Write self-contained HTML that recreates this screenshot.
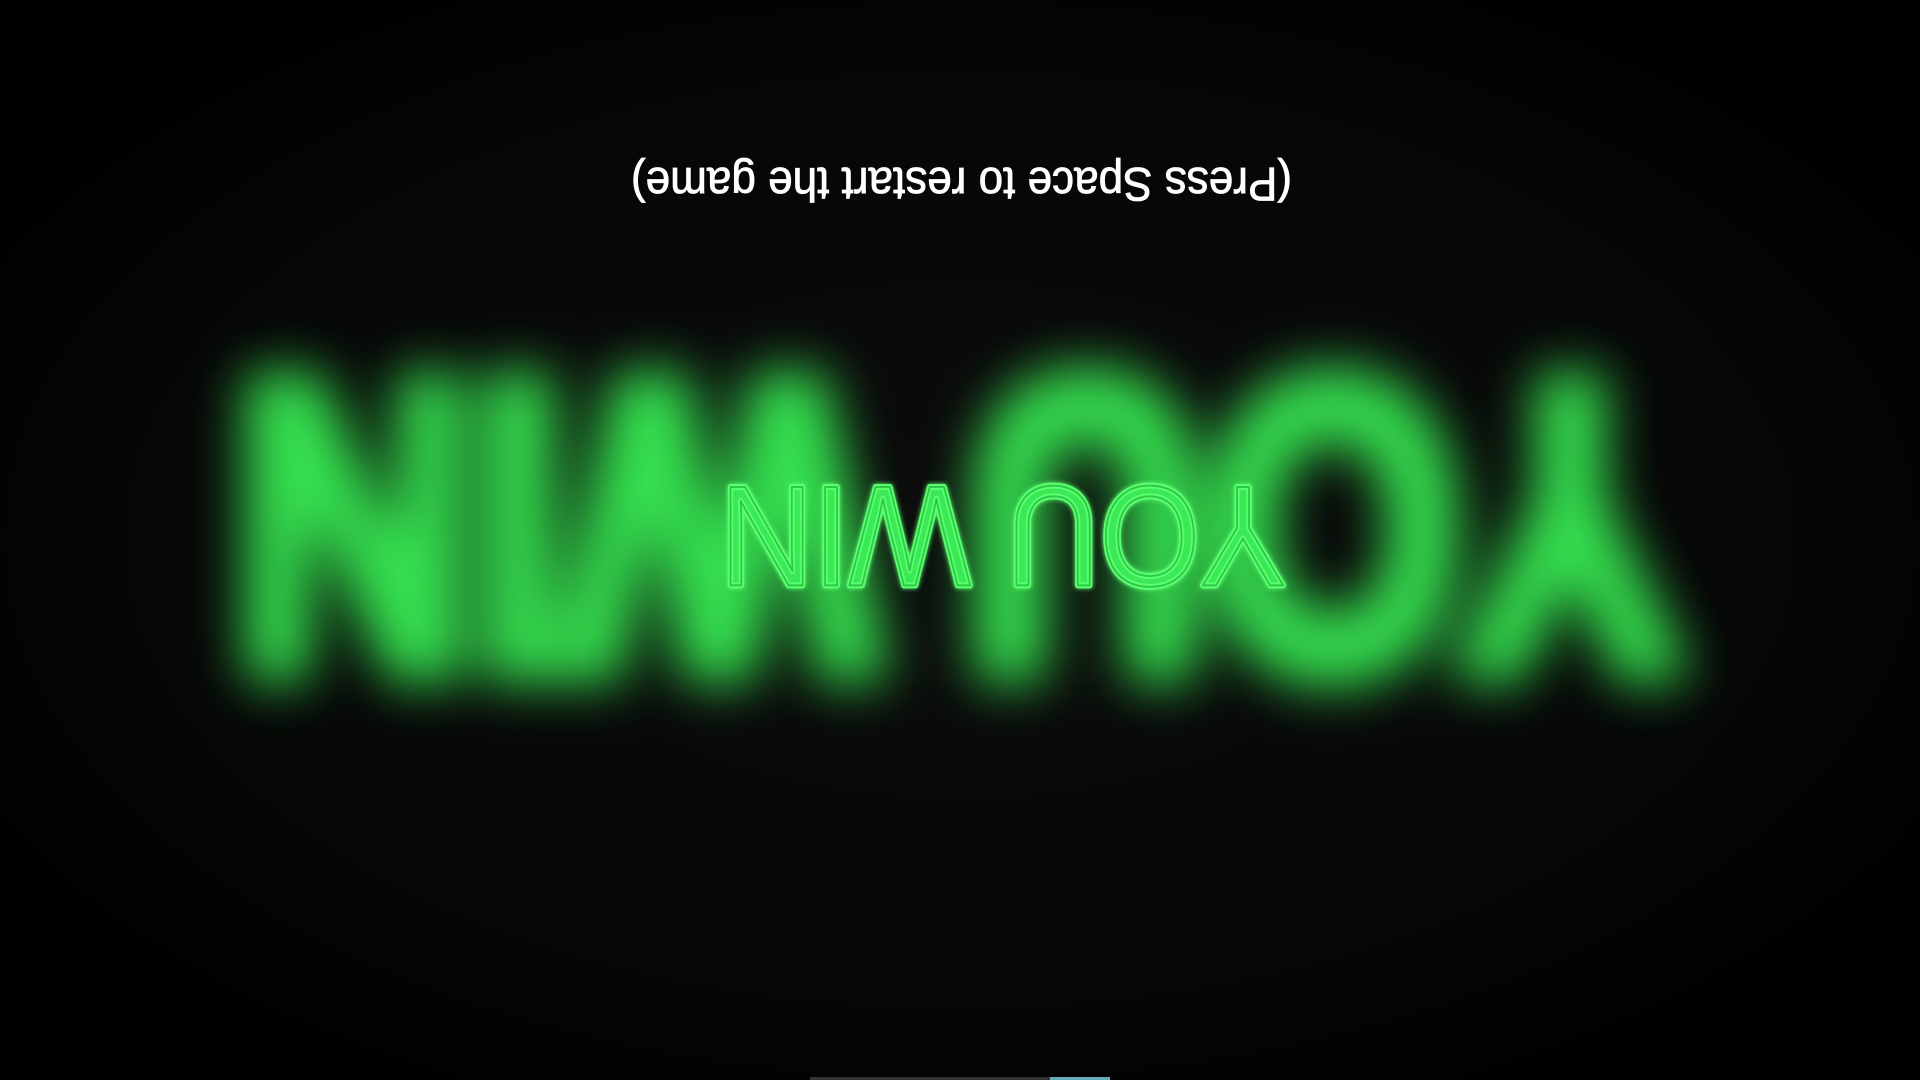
<!DOCTYPE html>
<html><head><meta charset="utf-8"><style>
html,body{margin:0;padding:0;background:#000;width:1920px;height:1080px;overflow:hidden}
svg{display:block}
</style></head><body>
<svg width="1920" height="1080" viewBox="0 0 1920 1080" xmlns="http://www.w3.org/2000/svg">
<defs>
<radialGradient id="bg" cx="50%" cy="50%" r="60%">
<stop offset="0" stop-color="#0c0c0c"/><stop offset="0.7" stop-color="#060606"/><stop offset="1" stop-color="#000"/>
</radialGradient>
<filter id="blur" x="-20%" y="-50%" width="140%" height="200%"><feGaussianBlur stdDeviation="26"/></filter>
<filter id="glow" x="-10%" y="-30%" width="120%" height="160%">
<feGaussianBlur in="SourceGraphic" stdDeviation="2.5" result="b"/>
<feMerge><feMergeNode in="b"/><feMergeNode in="SourceGraphic"/></feMerge>
</filter>
</defs>
<rect width="1920" height="1080" fill="url(#bg)"/>
<g transform="rotate(180 960 540)">
<text x="240" y="694" font-family="Liberation Sans, sans-serif" font-weight="bold" font-size="410" fill="#36e050" stroke="#36e050" stroke-width="30" stroke-linejoin="round" textLength="1445" lengthAdjust="spacingAndGlyphs" filter="url(#blur)">YOU WIN</text>
<text x="634" y="593" font-family="Liberation Sans, sans-serif" font-size="143" fill="#3be855" stroke="#5aff70" stroke-width="6" stroke-linejoin="round" textLength="566" lengthAdjust="spacingAndGlyphs" filter="url(#glow)">YOU WIN</text>
<text x="634" y="593" font-family="Liberation Sans, sans-serif" font-size="143" fill="none" stroke="#30c848" stroke-width="2" stroke-linejoin="round" textLength="566" lengthAdjust="spacingAndGlyphs">YOU WIN</text>
<text x="628" y="912" font-family="Liberation Sans, sans-serif" font-size="47" fill="#ffffff" stroke="#fff" stroke-width="0.8" textLength="661" lengthAdjust="spacingAndGlyphs">(Press Space to restart the game)</text>
</g>
<rect x="810" y="1077" width="240" height="3" fill="#333"/>
<rect x="1050" y="1077" width="60" height="3" fill="#6ab"/>
</svg>
</body></html>
